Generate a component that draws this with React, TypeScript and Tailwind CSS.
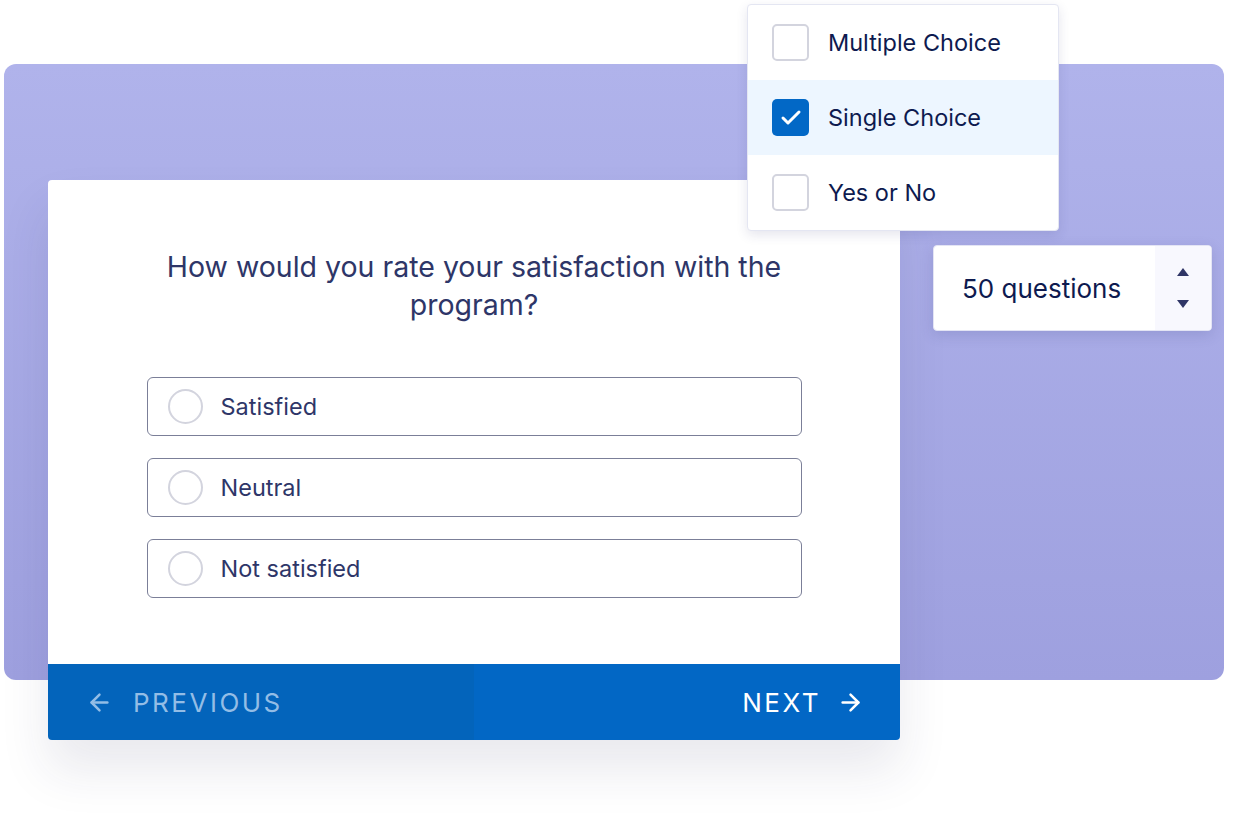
import { ArrowLeft, ArrowRight, Check } from 'lucide-react'

const options = ['Satisfied', 'Neutral', 'Not satisfied']

const types = [
  { label: 'Multiple Choice', checked: false },
  { label: 'Single Choice', checked: true },
  { label: 'Yes or No', checked: false },
]

function TypeMenu() {
  return (
    <div className="absolute left-[747px] top-[4px] w-[312px] overflow-hidden rounded-[4px] border border-[#e4e6f2] bg-white shadow-[0_4px_12px_rgba(40,44,110,0.12)]">
      {types.map((t) => (
        <div
          key={t.label}
          className={`flex h-[75px] items-center gap-[19px] pl-[24px] ${t.checked ? 'bg-[#edf6ff]' : ''}`}
        >
          {t.checked ? (
            <span className="flex h-[37px] w-[37px] items-center justify-center rounded-[5px] bg-[#0268c6]">
              <Check size={24} strokeWidth={3} className="text-white" />
            </span>
          ) : (
            <span className="h-[37px] w-[37px] rounded-[5px] border-2 border-[#d3d4de] bg-white" />
          )}
          <span className="text-[23.5px] text-[#0e1a4f]">{t.label}</span>
        </div>
      ))}
    </div>
  )
}

function CountInput() {
  return (
    <div className="absolute left-[933px] top-[245px] flex h-[86px] w-[279px] overflow-hidden rounded-[4px] border border-[#e3e4f4] bg-white shadow-[0_4px_14px_rgba(40,44,110,0.15)]">
      <div className="flex flex-1 items-center pl-[28px] text-[26px] text-[#0e1a4f]">50 questions</div>
      <div className="flex w-[56px] flex-col items-center justify-between bg-[#f8f8fe] py-[22px]">
        <svg width="12" height="8" viewBox="0 0 12 8">
          <path d="M6 0L12 8H0Z" fill="#2f3566" />
        </svg>
        <svg width="12" height="8" viewBox="0 0 12 8">
          <path d="M0 0H12L6 8Z" fill="#2f3566" />
        </svg>
      </div>
    </div>
  )
}

function QuestionCard() {
  return (
    <div className="absolute left-[48px] top-[180px] flex h-[560px] w-[852px] flex-col overflow-hidden rounded-[4px] bg-white shadow-[0_30px_50px_rgba(40,44,90,0.10)]">
      <div className="flex flex-1 flex-col items-center pt-[68px]">
        <h2 className="w-[670px] text-center text-[28.5px] leading-[38px] text-[#2e3668]">
          How would you rate your satisfaction with the program?
        </h2>
        <div className="mt-[53px] flex w-[655px] flex-col gap-[22px]">
          {options.map((o) => (
            <div
              key={o}
              className="flex h-[59px] items-center gap-[18px] rounded-[6px] border border-[#7b7f98] pl-[20px]"
            >
              <span className="h-[35px] w-[35px] rounded-full border-2 border-[#d3d4de]" />
              <span className="text-[23.5px] text-[#2e3668]">{o}</span>
            </div>
          ))}
        </div>
      </div>
      <div className="flex h-[76px]">
        <div className="flex w-[426px] items-center gap-[20px] bg-[#0364bb] pl-[38px] text-[26px] tracking-[2.5px] text-[#93bde6]">
          <ArrowLeft size={27} strokeWidth={2.2} />
          <span>PREVIOUS</span>
        </div>
        <div className="flex flex-1 items-center justify-end gap-[16px] bg-[#0267c5] pr-[36px] text-[26px] tracking-[2.5px] text-white">
          <span>NEXT</span>
          <ArrowRight size={27} strokeWidth={2.2} />
        </div>
      </div>
    </div>
  )
}

export default function App() {
  return (
    <div className="relative h-[820px] w-[1242px] overflow-hidden bg-white font-['Inter','Liberation_Sans',sans-serif]">
      <div className="mx-[4px] mt-[64px] h-[616px] w-[1220px] rounded-[12px] bg-gradient-to-b from-[#b0b3eb] to-[#9ea0df]" />
      <QuestionCard />
      <TypeMenu />
      <CountInput />
    </div>
  )
}
